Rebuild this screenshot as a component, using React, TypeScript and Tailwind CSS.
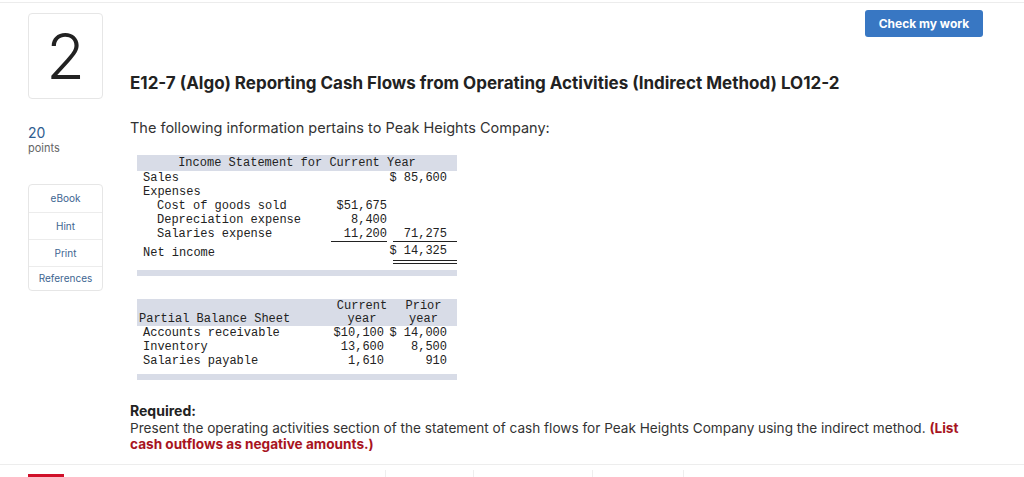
const sans = { fontFamily: "Inter, 'Open Sans', sans-serif" };

function Row({ label, indent, c2, c3, u2, u3 }: { label: string; indent?: boolean; c2?: string; c3?: string; u2?: boolean; u3?: boolean }) {
  return (
    <div className="flex h-[14px] items-center leading-[14px]">
      <div className={`w-[194px] whitespace-pre ${indent ? "pl-[20px]" : "pl-[6px]"}`}>{label}</div>
      <div className={`flex w-[56px] justify-end whitespace-pre ${u2 ? "border-b border-[#222]" : ""}`}>{c2}</div>
      <div className="w-[6px]" />
      <div className={`flex w-[64px] justify-end pr-[10px] whitespace-pre ${u3 ? "border-b border-[#222]" : ""}`}>{c3}</div>
    </div>
  );
}

function BsRow({ label, a, b }: { label: string; a: string; b: string }) {
  return (
    <div className="flex h-[14px] items-center leading-[14px]">
      <div className="w-[197px] pl-[6px] whitespace-pre">{label}</div>
      <div className="flex w-[56px] justify-end pr-[6px] whitespace-pre">{a}</div>
      <div className="flex w-[67px] justify-end pr-[10px] whitespace-pre">{b}</div>
    </div>
  );
}

const sideLinks = ["eBook", "Hint", "Print", "References"];
const tabs = [385, 473, 592, 683];

export default function App() {
  return (
    <div className="relative h-[477px] w-[1024px] overflow-hidden bg-white text-[#333]" style={sans}>
      <div className="mt-[2px] border-t border-[#ececec]" />
      <div className="flex">
        <aside className="ml-[28px] w-[75px] shrink-0 pt-[10px]">
          <div className="flex h-[86px] items-center justify-center rounded-[4px] border border-[#e6e6e6]">
            <span className="text-[63px] font-light leading-none text-[#222]">2</span>
          </div>
          <div className="mt-[26px] text-[14px] leading-[16px] text-[#2f5d8f]">20</div>
          <div className="text-[11px] leading-[14px] text-[#666]">points</div>
          <div className="mt-[29px] overflow-hidden rounded-[4px] border border-[#e6e6e6]">
            {sideLinks.map((s, i) => (
              <div
                key={s}
                className={`flex items-center justify-center text-[10px] text-[#3d6591] ${i > 0 ? "border-t border-[#ececec]" : ""} ${i === 3 ? "h-[24px]" : "h-[27px]"}`}
              >
                {s}
              </div>
            ))}
          </div>
        </aside>

        <main className="ml-[27px] flex-1 pt-[7px]">
          <div className="flex justify-end pr-[41px]">
            <button className="h-[27px] w-[118px] rounded-[3px] bg-[#3877c3] text-[12px] font-bold text-white">Check my work</button>
          </div>
          <h1 className="mt-[34px] text-[17px] font-bold leading-[24px] text-[#222]">
            E12-7 (Algo) Reporting Cash Flows from Operating Activities (Indirect Method) LO12-2
          </h1>
          <p className="mt-[23px] text-[14.5px] leading-[20px]">The following information pertains to Peak Heights Company:</p>

          <div className="mt-[17px] ml-[7px] w-[320px] text-[12px] text-[#222]" style={{ fontFamily: "'Liberation Mono', 'Courier New', monospace" }}>
            <div className="h-[16px] bg-[#d8dce7] text-center leading-[16px]">Income Statement for Current Year</div>
            <Row label="Sales" c3="$ 85,600" />
            <Row label="Expenses" />
            <Row label="Cost of goods sold" indent c2="$51,675" />
            <Row label="Depreciation expense" indent c2="8,400" />
            <Row label="Salaries expense" indent c2="11,200" c3="71,275" u2 u3 />
            <div className="flex h-[23px] items-center">
              <div className="w-[256px] pl-[6px]">Net income</div>
              <div className="w-[64px] self-stretch">
                <div className="flex h-[19px] items-center justify-end whitespace-pre pr-[10px]">$ 14,325</div>
                <div className="border-t border-[#222]" />
                <div className="mt-[2px] border-t border-[#222]" />
              </div>
            </div>
            <div className="mt-[6px] h-[6px] bg-[#d8dce7]" />

            <div className="mt-[23px] flex h-[27px] bg-[#d8dce7] pt-[1px] leading-[13px]">
              <div className="flex w-[197px] items-end pl-[2px]">Partial Balance Sheet</div>
              <div className="w-[56px] text-center">Current<br />year</div>
              <div className="w-[67px] text-center">Prior<br />year</div>
            </div>
            <BsRow label="Accounts receivable" a="$10,100" b="$ 14,000" />
            <BsRow label="Inventory" a="13,600" b="8,500" />
            <BsRow label="Salaries payable" a="1,610" b="910" />
            <div className="mt-[6px] h-[6px] bg-[#d8dce7]" />
          </div>

          <div className="mt-[22px] w-[840px]">
            <div className="text-[14px] font-bold leading-[18px] text-[#222]">Required:</div>
            <p className="text-[13.6px] leading-[16px]">
              Present the operating activities section of the statement of cash flows for Peak Heights Company using the indirect method.{" "}
              <span className="font-bold text-[#a8141e]">(List cash outflows as negative amounts.)</span>
            </p>
          </div>
        </main>
      </div>

      <div className="absolute inset-x-0 top-[464px] border-t border-[#ededed]">
        <div className="absolute left-[28px] top-[9px] h-[4px] w-[36px] bg-[#d0102a]" />
        {tabs.map((x) => (
          <div key={x} className="absolute top-[5px] h-[10px] border-l border-[#eeeeee]" style={{ left: x }} />
        ))}
      </div>
    </div>
  );
}
